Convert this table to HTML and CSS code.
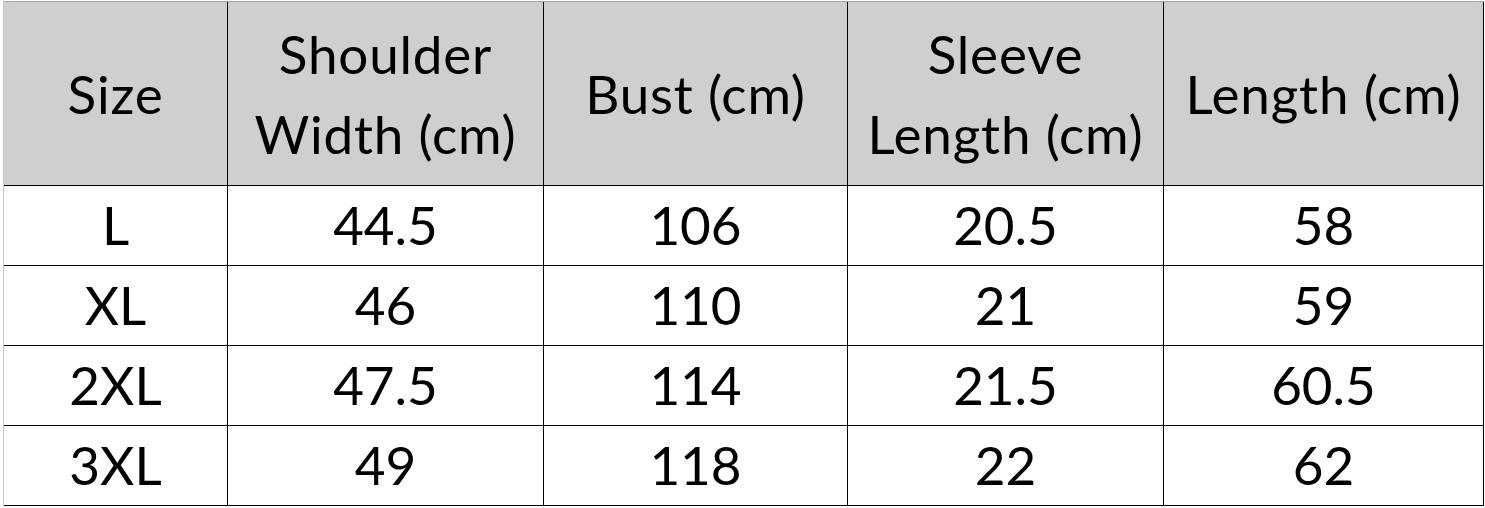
FILE: index.html
```html
<!DOCTYPE html>
<html lang="en">
<head>
<meta charset="utf-8">
<title>Size chart</title>
<link rel="stylesheet" href="styles.css">
</head>
<body>
<div class="sheet">
  <div class="grid">
    <div class="cell head">Size</div>
    <div class="cell head">Shoulder<br>Width (cm)</div>
    <div class="cell head">Bust (cm)</div>
    <div class="cell head">Sleeve<br>Length (cm)</div>
    <div class="cell head">Length (cm)</div>

    <div class="cell">L</div>
    <div class="cell">44.5</div>
    <div class="cell">106</div>
    <div class="cell">20.5</div>
    <div class="cell">58</div>

    <div class="cell">XL</div>
    <div class="cell">46</div>
    <div class="cell">110</div>
    <div class="cell">21</div>
    <div class="cell">59</div>

    <div class="cell">2XL</div>
    <div class="cell">47.5</div>
    <div class="cell">114</div>
    <div class="cell">21.5</div>
    <div class="cell">60.5</div>

    <div class="cell">3XL</div>
    <div class="cell">49</div>
    <div class="cell">118</div>
    <div class="cell">22</div>
    <div class="cell">62</div>
  </div>
</div>
</body>
</html>
```

FILE: styles.css
```css
html, body {
  margin: 0;
  padding: 0;
  background: #ffffff;
}

.sheet {
  padding: 1px 0 0 3px;
}

.grid {
  display: grid;
  grid-template-columns: 224px 316px 304px 316px 320px;
  grid-template-rows: 184px repeat(4, 80px);
  width: max-content;
  border-top: 1px solid #a6a6a6;
  border-left: 1px solid #c8c8c8;
  font-family: "Lato", "Open Sans", sans-serif;
  font-size: 53px;
  color: #000000;
}

.cell {
  box-sizing: border-box;
  border-right: 1px solid #000000;
  border-bottom: 1px solid #000000;
  display: flex;
  align-items: center;
  justify-content: center;
  text-align: center;
  line-height: 80px;
  padding-bottom: 2px;
}

.head {
  background: #d0cece;
  padding-bottom: 0;
  letter-spacing: 0.8px;
}
```
